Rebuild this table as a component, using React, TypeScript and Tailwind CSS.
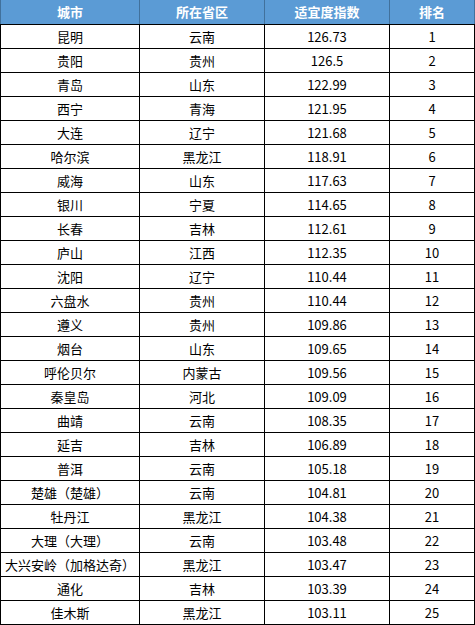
const rows: [string, string, string, number][] = [
  ["昆明", "云南", "126.73", 1],
  ["贵阳", "贵州", "126.5", 2],
  ["青岛", "山东", "122.99", 3],
  ["西宁", "青海", "121.95", 4],
  ["大连", "辽宁", "121.68", 5],
  ["哈尔滨", "黑龙江", "118.91", 6],
  ["威海", "山东", "117.63", 7],
  ["银川", "宁夏", "114.65", 8],
  ["长春", "吉林", "112.61", 9],
  ["庐山", "江西", "112.35", 10],
  ["沈阳", "辽宁", "110.44", 11],
  ["六盘水", "贵州", "110.44", 12],
  ["遵义", "贵州", "109.86", 13],
  ["烟台", "山东", "109.65", 14],
  ["呼伦贝尔", "内蒙古", "109.56", 15],
  ["秦皇岛", "河北", "109.09", 16],
  ["曲靖", "云南", "108.35", 17],
  ["延吉", "吉林", "106.89", 18],
  ["普洱", "云南", "105.18", 19],
  ["楚雄（楚雄）", "云南", "104.81", 20],
  ["牡丹江", "黑龙江", "104.38", 21],
  ["大理（大理）", "云南", "103.48", 22],
  ["大兴安岭（加格达奇）", "黑龙江", "103.47", 23],
  ["通化", "吉林", "103.39", 24],
  ["佳木斯", "黑龙江", "103.11", 25],
];

const font = { fontFamily: '"Noto Sans CJK SC", "Liberation Sans", sans-serif' };

export default function App() {
  return (
    <div className="w-[475px] h-[625px] bg-white overflow-hidden" style={font}>
      <table className="table-fixed border-collapse w-[475px] text-[13px] text-black">
        <colgroup>
          <col className="w-[139px]" />
          <col className="w-[125px]" />
          <col className="w-[125px]" />
          <col />
        </colgroup>
        <thead>
          <tr className="h-6 bg-[#5b9bd5] text-white font-bold">
            <th className="border-x border-[#41719c] border-b border-b-black p-0 leading-none">城市</th>
            <th className="border-x border-[#41719c] border-b border-b-black p-0 leading-none">所在省区</th>
            <th className="border-x border-[#41719c] border-b border-b-black p-0 leading-none">适宜度指数</th>
            <th className="border-x border-[#41719c] border-b border-b-black p-0 leading-none">排名</th>
          </tr>
        </thead>
        <tbody>
          {rows.map(([city, prov, idx, rank]) => (
            <tr key={rank} className="h-6">
              <td className="border border-black p-0 text-center leading-none whitespace-nowrap">{city}</td>
              <td className="border border-black p-0 text-center leading-none">{prov}</td>
              <td className="border border-black p-0 text-center leading-none">{idx}</td>
              <td className="border border-black p-0 text-center leading-none">{rank}</td>
            </tr>
          ))}
        </tbody>
      </table>
    </div>
  );
}
